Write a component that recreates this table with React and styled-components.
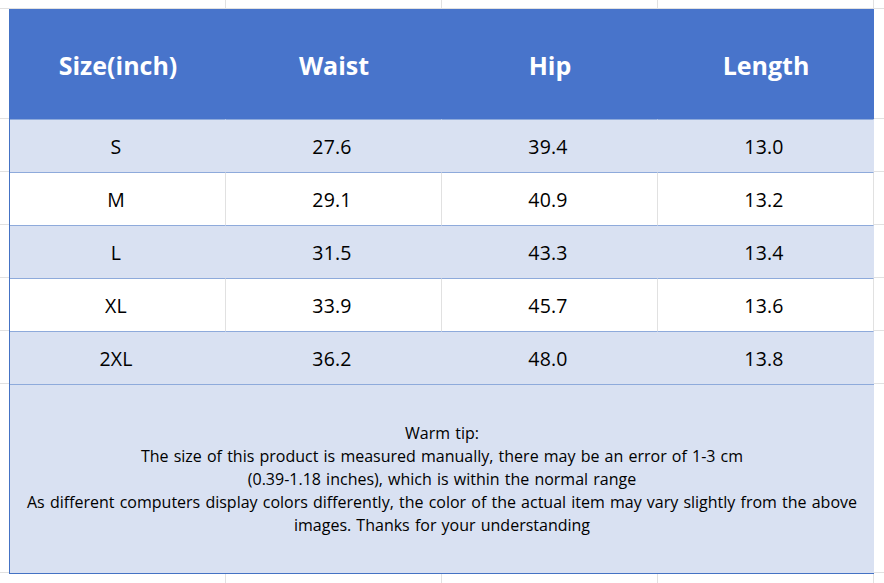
import React from "react";
import styled, { createGlobalStyle } from "styled-components";

const Global = createGlobalStyle`
  html, body { margin: 0; padding: 0; background: #fff; }
  body { font-family: "Open Sans", "Noto Sans CJK KR", sans-serif; }
`;

const grid = "#e1e1e1";

const Sheet = styled.div`
  width: 884px;
  height: 583px;
  box-sizing: border-box;
  padding: 9px 10px 0 9px;
  overflow: hidden;
  background-color: #fff;
  background-image:
    linear-gradient(${grid}, ${grid}),
    linear-gradient(${grid}, ${grid}),
    linear-gradient(${grid}, ${grid}),
    linear-gradient(${grid}, ${grid});
  background-size: 1px 583px, 1px 583px, 1px 583px, 1px 583px;
  background-position: 225px 0, 441px 0, 657px 0, 873px 0;
  background-repeat: no-repeat;
  position: relative;
`;

const HLines = styled.div`
  position: absolute;
  inset: 0;
  pointer-events: none;
  z-index: 0;
  background-image: ${({ $ys }) => $ys.map(() => `linear-gradient(${grid}, ${grid})`).join(",")};
  background-size: 884px 1px;
  background-position: ${({ $ys }) => $ys.map((y) => `0 ${y}px`).join(",")};
  background-repeat: no-repeat;
`;

const Table = styled.div`
  position: relative;
  z-index: 1;
  width: 865px;
  display: grid;
  grid-template-columns: repeat(4, 216px);
  border-left: 1px solid #4472c4;
`;

const HeadCell = styled.div`
  height: 110px;
  background: #4874cb;
  color: #fff;
  font-weight: 700;
  font-size: 25px;
  display: flex;
  align-items: center;
  justify-content: center;
  padding-top: 1px;
  box-sizing: border-box;
`;

const Cell = styled.div`
  height: 53px;
  box-sizing: border-box;
  background: ${({ $shade }) => ($shade ? "#d9e1f2" : "#fff")};
  border-top: 1px solid #8eaadb;
  border-right: 1px solid ${({ $shade }) => ($shade ? "#d9e1f2" : grid)};
  color: #000;
  font-size: 19.5px;
  letter-spacing: 0.2px;
  display: flex;
  align-items: center;
  justify-content: center;
  padding-right: 3px;
  &:last-child { border-right-color: transparent; }
`;

const Note = styled.div`
  grid-column: 1 / -1;
  height: 190px;
  box-sizing: border-box;
  background: #d9e1f2;
  border-top: 1px solid #8eaadb;
  border-bottom: 1px solid #4472c4;
  display: flex;
  flex-direction: column;
  align-items: center;
  justify-content: center;
  padding-top: 1px;
  font-size: 16px;
  letter-spacing: 0;
  word-spacing: 1px;
  line-height: 23px;
  color: #000;
  text-align: center;
`;

const Line = styled.div`
  white-space: nowrap;
`;

const head = ["Size(inch)", "Waist", "Hip", "Length"];
const rows = [
  ["S", "27.6", "39.4", "13.0"],
  ["M", "29.1", "40.9", "13.2"],
  ["L", "31.5", "43.3", "13.4"],
  ["XL", "33.9", "45.7", "13.6"],
  ["2XL", "36.2", "48.0", "13.8"],
];

export default function App() {
  return (
    <>
      <Global />
      <Sheet>
        <HLines $ys={[8, 118, 171, 224, 277, 330, 383, 572]} />
        <Table>
          {head.map((h) => (
            <HeadCell key={h}>{h}</HeadCell>
          ))}
          {rows.map((r, i) =>
            r.map((v, j) => (
              <Cell key={`${i}-${j}`} $shade={i % 2 === 0}>
                {v}
              </Cell>
            ))
          )}
          <Note>
            <Line>Warm tip:</Line>
            <Line>The size of this product is measured manually, there may be an error of 1-3 cm</Line>
            <Line>(0.39-1.18 inches), which is within the normal range</Line>
            <Line>As different computers display colors differently, the color of the actual item may vary slightly from the above</Line>
            <Line>images. Thanks for your understanding</Line>
          </Note>
        </Table>
      </Sheet>
    </>
  );
}
